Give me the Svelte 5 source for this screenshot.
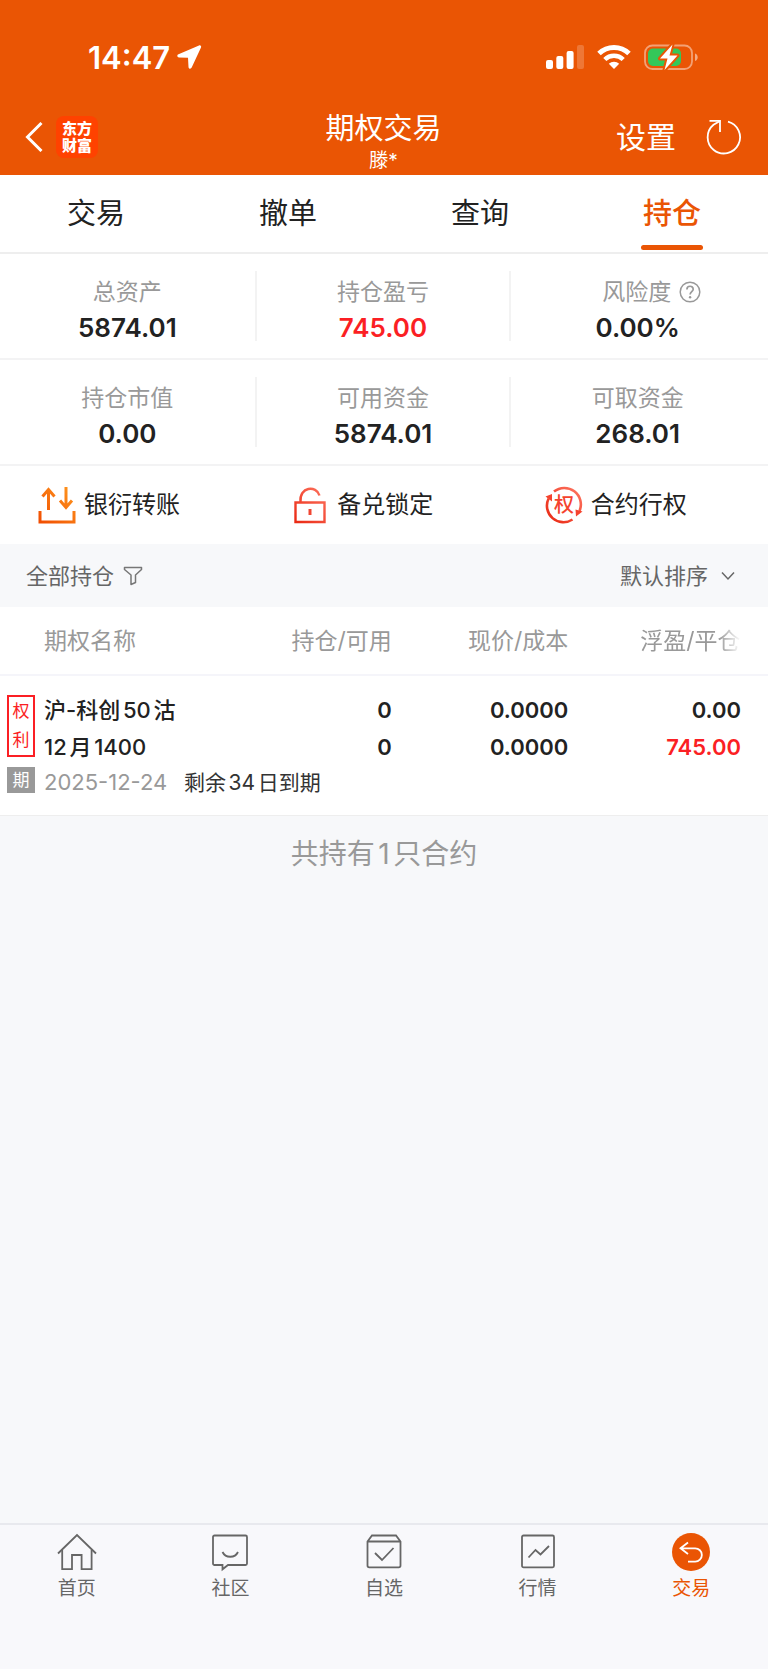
<script lang="ts">
	type Stat = { label: string; value: string; gain?: boolean; help?: boolean };

	const tabs = ['交易', '撤单', '查询', '持仓'];
	let activeTab = $state('持仓');

	const stats: Stat[][] = [
		[
			{ label: '总资产', value: '5874.01' },
			{ label: '持仓盈亏', value: '745.00', gain: true },
			{ label: '风险度', value: '0.00%', help: true }
		],
		[
			{ label: '持仓市值', value: '0.00' },
			{ label: '可用资金', value: '5874.01' },
			{ label: '可取资金', value: '268.01' }
		]
	];

	const actions = [
		{ id: 'transfer', label: '银衍转账', from: '#f04a00', to: '#ff9a1f' },
		{ id: 'lock', label: '备兑锁定', from: '#e8220c', to: '#ff7a66' },
		{ id: 'exercise', label: '合约行权', from: '#e8220c', to: '#ff7a66' }
	];

	const positions = [
		{
			name: ['沪-科创50沽', '12月1400'],
			amount: ['0', '0'],
			price: ['0.0000', '0.0000'],
			profit: ['0.00', '745.00'],
			expiry: '2025-12-24',
			remaining: '剩余34日到期'
		}
	];

	const navItems = [
		{ id: 'home', label: '首页' },
		{ id: 'community', label: '社区' },
		{ id: 'watchlist', label: '自选' },
		{ id: 'market', label: '行情' },
		{ id: 'trade', label: '交易' }
	];
</script>

<div class="page">
	<header>
		<div class="status-bar">
			<div class="clock">
				<span>14:47</span>
				<svg width="26" height="26" viewBox="0 0 26 26" aria-hidden="true">
					<path
						d="M23 1.5 2.5 10.3c-1.8.8-1.4 3 .5 3.1l9 .4.5 9.2c.1 2 2.4 2.4 3.2.6L25 3.5c.6-1.4-.6-2.6-2-2Z"
						fill="#fff"
					/>
				</svg>
			</div>
			<div class="signals">
				<svg width="38" height="26" viewBox="0 0 38 26" fill="#fff" aria-hidden="true">
					<rect x="0" y="16" width="7" height="9" rx="2" />
					<rect x="10.3" y="12" width="7" height="13" rx="2" />
					<rect x="20.6" y="7" width="7" height="18" rx="2" />
					<rect x="31" y="1" width="7" height="24" rx="2" opacity="0.2" />
				</svg>
				<svg width="34" height="26" viewBox="0 0 34 26" fill="none" stroke="#fff" aria-hidden="true">
					<path d="M2 9.5a21.5 21.5 0 0 1 30 0" stroke-width="5" />
					<path d="M7.8 15.5a13.2 13.2 0 0 1 18.4 0" stroke-width="4.5" />
					<path d="M11.8 19.7a7.6 7.6 0 0 1 10.4 0L17 25Z" fill="#fff" stroke="none" />
				</svg>
				<svg width="55" height="27" viewBox="0 0 55 27" aria-hidden="true">
					<rect x="1" y="1.5" width="47" height="23.5" rx="7.5" fill="none" stroke="#fff" stroke-width="1.8" opacity="0.45" />
					<path d="M51 9.5c3.6 1 3.6 6.5 0 7.5Z" fill="#fff" opacity="0.5" />
					<rect x="4" y="4.5" width="33" height="17.5" rx="5" fill="#34c759" />
					<path
						d="M28.5.5 16 14.5h7.5L20.5 26 33.5 11.5H25.5Z"
						fill="#fff"
						stroke="#ea5504"
						stroke-width="4"
						stroke-linejoin="round"
						paint-order="stroke"
					/>
				</svg>
			</div>
		</div>

		<div class="title-bar">
			<div class="title-left">
				<button class="plain" aria-label="返回">
					<svg width="18" height="30" viewBox="0 0 18 30" fill="none" stroke="#fff" stroke-width="3">
						<path d="M16.5 1 2.5 15l14 14" />
					</svg>
				</button>
				<a class="logo" href="#home"><span>东方</span><span>财富</span></a>
			</div>
			<div class="title">
				<h1>期权交易</h1>
				<p>滕*</p>
			</div>
			<div class="title-right">
				<button class="plain settings">设置</button>
				<button class="plain" aria-label="刷新">
					<svg width="36" height="36" viewBox="0 0 36 36" fill="none" stroke="#fff" stroke-width="1.8">
						<path d="M22 2.6A16.2 16.2 0 1 1 7.5 5.8L14 1.9" />
						<path d="M3.5 1.9H14V13" />
					</svg>
				</button>
			</div>
		</div>
	</header>

	<nav class="tabs">
		{#each tabs as tab}
			<button class:active={tab === activeTab} onclick={() => (activeTab = tab)}>{tab}</button>
		{/each}
	</nav>

	{#each stats as row}
		<dl class="stats">
			{#each row as stat}
				<div class="stat">
					<dt class:with-help={stat.help}>
						{stat.label}
						{#if stat.help}
							<svg width="22" height="22" viewBox="0 0 22 22" fill="none" stroke="#999" stroke-width="1.5" aria-hidden="true">
								<circle cx="11" cy="11" r="9.8" />
								<path d="M7.9 8.5c0-4.3 6.3-4.2 6.3-.3 0 2.3-3.1 2.6-3.1 5.3" stroke-width="1.7" />
								<circle cx="11.1" cy="16.2" r="1.2" fill="#999" stroke="none" />
							</svg>
						{/if}
					</dt>
					<dd class:gain={stat.gain}>{stat.value}</dd>
				</div>
			{/each}
		</dl>
	{/each}

	<div class="actions">
		{#each actions as action}
			<button class="plain">
				<svg width="38" height="38" viewBox="0 0 38 38" fill="none" stroke="url(#{action.id}-fill)" aria-hidden="true">
					<defs>
						<linearGradient id="{action.id}-fill" x1="0" y1="38" x2="38" y2="0" gradientUnits="userSpaceOnUse">
							<stop offset="0" stop-color={action.from} />
							<stop offset="1" stop-color={action.to} />
						</linearGradient>
					</defs>
					{#if action.id === 'transfer'}
						<g stroke-width="3">
							<path d="M2 25v11h34V25" />
							<path d="M10.5 24V3M4.5 10.5l6-7 6 7M28 1v20M22 14.5l6 7 6-7" />
						</g>
					{:else if action.id === 'lock'}
						<g stroke-width="2.4">
							<path d="M4.5 16.5h29V36h-29Z" />
							<path d="M9.5 16C8 .5 25.5-1 28.5 9.5" />
							<path d="M19 23v6" stroke="#f04632" stroke-width="3" />
						</g>
					{:else}
						<g stroke-width="2.6">
							<path d="M9 5.6A16.5 16.5 0 0 1 34.5 25" />
							<path d="M3.6 12.5A16.5 16.5 0 0 0 27.5 33.5" />
						</g>
						<g fill="#f5432e" stroke="none">
							<path d="M.5 10.5 7 8v7.5ZM30.5 23.5l7 2-6.5 5Z" />
							<text x="19" y="26" text-anchor="middle" font-size="20" font-weight="500">权</text>
						</g>
					{/if}
				</svg>
				{action.label}
			</button>
		{/each}
	</div>

	<div class="filters">
		<button class="plain">
			全部持仓
			<svg width="20" height="20" viewBox="0 0 20 20" fill="none" stroke="#777" stroke-width="1.5" stroke-linejoin="round" aria-hidden="true">
				<path d="M1.5 1.5h17v2L12.5 9v7.5l-4.500 2V9L1.5 3.5Z" />
			</svg>
		</button>
		<label>
			<select aria-label="排序">
				<option>默认排序</option>
			</select>
			<svg width="14" height="10" viewBox="0 0 14 10" fill="none" stroke="#666" stroke-width="1.5" aria-hidden="true">
				<path d="m1 1.5 6 6.5 6-6.5" />
			</svg>
		</label>
	</div>

	<table>
		<colgroup>
			<col class="col-tag" />
			<col />
			<col class="col-amount" />
			<col class="col-price" />
			<col class="col-profit" />
		</colgroup>
		<thead>
			<tr>
				<th colspan="2" class="name-head">期权名称</th>
				<th>持仓/可用</th>
				<th>现价/成本</th>
				<th><span class="faded">浮盈/平仓</span></th>
			</tr>
		</thead>
		<tbody>
			{#each positions as item}
				<tr class="main-row">
					<td class="tag-cell"><span class="tag right">权<br />利</span></td>
					<td class="name">{item.name[0]}<br />{item.name[1]}</td>
					<td>{item.amount[0]}<br />{item.amount[1]}</td>
					<td>{item.price[0]}<br />{item.price[1]}</td>
					<td>{item.profit[0]}<br /><span class="gain">{item.profit[1]}</span></td>
				</tr>
				<tr class="expiry-row">
					<td class="tag-cell"><span class="tag term">期</span></td>
					<td colspan="4" class="expiry"><time>{item.expiry}</time><span>{item.remaining}</span></td>
				</tr>
			{/each}
		</tbody>
	</table>

	<p class="summary">共持有{positions.length}只合约</p>

	<nav class="bottom-nav">
		{#each navItems as item}
			<a href="#{item.id}" class:current={item.id === 'trade'}>
				<svg width="40" height="40" viewBox="0 0 40 40" fill="none" stroke="#666" stroke-width="1.8" aria-hidden="true">
					{#if item.id === 'home'}
						<path d="M1 21.5 20 3l19 18.5" />
						<path d="M5.2 18v19.2h9.8V23h9.6v14.2h10V18" />
					{:else if item.id === 'community'}
						<path d="M4.5 3.5h31a1.5 1.5 0 0 1 1.5 1.5v26.5a1.5 1.5 0 0 1-1.5 1.5H18l-5.5 4.3V33h-8A1.5 1.5 0 0 1 3 31.5V5a1.5 1.5 0 0 1 1.5-1.5Z" />
						<path d="M12.5 20c3 6.3 12.5 6.3 15.5 0" />
					{:else if item.id === 'watchlist'}
						<path d="M3.5 9.5 8 3.5h24l4.5 6v24a1.8 1.8 0 0 1-1.8 1.8H5.3a1.8 1.8 0 0 1-1.8-1.8ZM3.5 9.5h33" />
						<path d="m11 21 7 7 11.5-12" />
					{:else if item.id === 'market'}
						<rect x="4" y="3.5" width="32" height="31.8" rx="1.5" />
						<path d="m10.5 25.5 7-7.5 5 4.5 8.5-8.5" />
					{:else}
						<circle cx="20" cy="20" r="19" fill="#ea5504" stroke="none" />
						<path d="M17 10.5 9.5 16.3l7.5 5.7M9.5 16.3h14.7a6.6 6.6 0 0 1 0 13.3H17" stroke="#fff" />
					{/if}
				</svg>
				{item.label}
			</a>
		{/each}
	</nav>
</div>

<style>
	:global(body) {
		margin: 0;
	}

	.page {
		display: flex;
		flex-direction: column;
		min-height: 100vh;
		background: #f7f8fa;
		color: #222;
		font-family: Inter, 'Noto Sans CJK SC', sans-serif;
		font-size: 23px;
	}

	.page :is(h1, p, dl, dd) {
		margin: 0;
	}

	svg {
		display: block;
		flex: none;
	}

	button,
	select {
		padding: 0;
		border: 0;
		background: none;
		color: inherit;
		font: inherit;
	}

	.plain {
		display: flex;
		align-items: center;
		line-height: 32px;
	}

	.gain {
		color: #fb1f24;
	}

	header {
		background: #ea5504;
		color: #fff;
	}

	.status-bar {
		display: flex;
		align-items: center;
		justify-content: space-between;
		height: 104px;
		padding: 10px 69px 0 88px;
		box-sizing: border-box;
	}

	.clock,
	.signals {
		display: flex;
		align-items: center;
	}

	.clock {
		gap: 6px;
		font-size: 31px;
		font-weight: 600;
	}

	.signals {
		gap: 13px;
	}

	.title-bar {
		display: grid;
		grid-template-columns: 1fr auto 1fr;
		align-items: start;
		height: 71px;
		padding: 0 26px 0 25px;
	}

	.title-left,
	.title-right {
		display: flex;
		align-items: center;
		height: 66px;
	}

	.title-left {
		gap: 13px;
	}

	.title-right {
		justify-content: flex-end;
		gap: 30px;
	}

	.logo {
		display: flex;
		flex-direction: column;
		align-items: center;
		justify-content: center;
		width: 42px;
		height: 42px;
		border-radius: 8px;
		background: #ff4200;
		color: #fff;
		font-size: 15px;
		font-weight: 900;
		line-height: 17px;
		text-decoration: none;
	}

	.title {
		padding-top: 6px;
		text-align: center;
	}

	.title h1 {
		font-size: 29px;
		font-weight: 400;
		line-height: 38px;
	}

	.title p {
		font-size: 19px;
		line-height: 26px;
	}

	.settings {
		font-size: 30px;
		line-height: 40px;
	}

	.tabs {
		display: grid;
		grid-template-columns: repeat(4, 1fr);
		background: #fff;
		border-bottom: 2px solid #eee;
	}

	.tabs button {
		position: relative;
		height: 77px;
		font-size: 29px;
		line-height: 38px;
	}

	.tabs .active {
		color: #ea5504;
		font-weight: 500;
	}

	.tabs .active::after {
		content: '';
		position: absolute;
		left: 50%;
		bottom: 2px;
		width: 62px;
		height: 5px;
		border-radius: 3px;
		background: #ea5504;
		transform: translateX(-50%);
	}

	.stats {
		display: grid;
		grid-template-columns: repeat(3, 1fr);
		padding: 17px 4px 17px 0;
		background: #fff;
		border-bottom: 2px solid #f3f3f4;
	}

	.stat {
		height: 70px;
		text-align: center;
	}

	.stat + .stat {
		border-left: 2px solid #f3f3f3;
	}

	dt {
		padding-top: 4px;
		color: #999;
		line-height: 34px;
	}

	.with-help {
		display: flex;
		align-items: center;
		justify-content: center;
		gap: 8px;
		padding-left: 28px;
	}

	dd {
		font-size: 26px;
		font-weight: 600;
		line-height: 38px;
	}

	.actions {
		display: grid;
		grid-template-columns: repeat(3, 1fr);
		padding-right: 8px;
		background: #fff;
	}

	.actions button {
		gap: 8px;
		height: 78px;
		padding-left: 38px;
		font-size: 24px;
	}

	.filters {
		display: flex;
		align-items: center;
		justify-content: space-between;
		height: 63px;
		padding: 0 33px 0 26px;
		color: #666;
		font-size: 22px;
	}

	.filters button {
		gap: 9px;
	}

	.filters label {
		display: flex;
		align-items: center;
		gap: 12px;
	}

	select {
		appearance: none;
	}

	table {
		width: 100%;
		table-layout: fixed;
		border-collapse: collapse;
		background: #fff;
		border-bottom: 1px solid #eee;
		text-autospace: normal;
	}

	.col-tag {
		width: 44px;
	}

	.col-amount {
		width: 18%;
	}

	.col-price {
		width: 23%;
	}

	.col-profit {
		width: 26%;
	}

	th {
		height: 67px;
		padding: 0;
		border-bottom: 2px solid #f5f5fa;
		color: #999;
		font-weight: 400;
		line-height: 32px;
		text-align: right;
		white-space: nowrap;
	}

	th:last-child,
	td:last-child {
		padding-right: 27px;
	}

	.name-head {
		padding-left: 44px;
		text-align: left;
	}

	.faded {
		display: block;
		margin-left: 72px;
		overflow: hidden;
		text-align: left;
		mask-image: linear-gradient(to right, #000 78%, transparent);
	}

	td {
		padding: 0;
		font-size: 22px;
		font-weight: 600;
		line-height: 37px;
		text-align: right;
		vertical-align: top;
	}

	.main-row td {
		padding-top: 16px;
	}

	td.name,
	td.expiry {
		text-align: left;
		white-space: nowrap;
	}

	td.name {
		font-weight: 500;
	}

	.main-row .tag-cell {
		padding-top: 19px;
	}

	.tag {
		display: block;
		width: 28px;
		margin-left: 7px;
		box-sizing: border-box;
		font-size: 17px;
		font-weight: 400;
		text-align: center;
	}

	.right {
		border: 2px solid #fb1f24;
		color: #fb1f24;
		line-height: 29px;
	}

	.term {
		margin-top: 1px;
		background: #999;
		color: #fff;
		line-height: 26px;
	}

	.expiry-row td {
		height: 49px;
	}

	td.expiry {
		color: #333;
		font-weight: 400;
		line-height: 32px;
	}

	.expiry time {
		margin-right: 14px;
		color: #999;
	}

	.expiry span {
		font-size: 21px;
	}

	.summary {
		padding: 18px 0;
		color: #999;
		font-size: 28px;
		line-height: 40px;
		text-align: center;
		text-autospace: normal;
	}

	.bottom-nav {
		display: grid;
		grid-template-columns: repeat(5, 1fr);
		margin-top: auto;
		padding: 7px 0 66px;
		border-top: 2px solid #e8e9ee;
		background: #f8f8fb;
	}

	.bottom-nav a {
		display: flex;
		flex-direction: column;
		align-items: center;
		gap: 2px;
		color: #666;
		font-size: 19px;
		line-height: 29px;
		text-decoration: none;
	}

	.bottom-nav .current {
		color: #ea5504;
	}
</style>
